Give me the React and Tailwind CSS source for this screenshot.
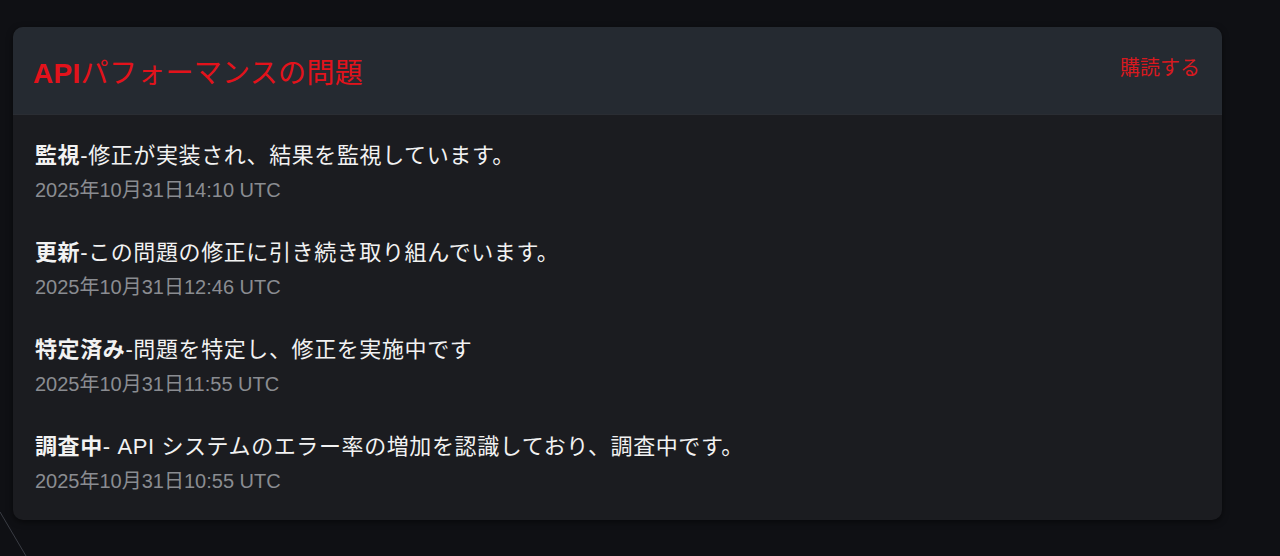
import React from "react";

const items = [
  { s: "監視", t: "-修正が実装され、結果を監視しています。", d: "2025年10月31日14:10 UTC" },
  { s: "更新", t: "-この問題の修正に引き続き取り組んでいます。", d: "2025年10月31日12:46 UTC" },
  { s: "特定済み", t: "-問題を特定し、修正を実施中です", d: "2025年10月31日11:55 UTC" },
  { s: "調査中", t: "- API システムのエラー率の増加を認識しており、調査中です。", d: "2025年10月31日10:55 UTC" },
];

const font = { fontFamily: '"Liberation Sans", "Noto Sans CJK JP", sans-serif' };

export default function App() {
  return (
    <div className="relative w-[1280px] h-[556px] overflow-hidden bg-[#0f1014]" style={font}>
      <svg className="absolute left-0 top-0" width="1280" height="556">
        <line x1="0" y1="512" x2="26" y2="556" stroke="#3a3d44" strokeWidth="1" />
      </svg>
      <div className="relative pl-[13px] pt-[27px]">
        <div className="w-[1209px] rounded-[10px] overflow-hidden bg-[#1b1c20] shadow-[0_2px_6px_rgba(0,0,0,0.5)]">
          <div className="h-[88px] bg-[#252a31] border-b border-[#2a2d33] pl-[20px] pr-[22px] flex items-center justify-between">
            <div className="text-[28px] leading-[34px] text-[#e3121b] pt-[6px] tracking-[0.3px]">
              <span className="font-bold">API</span>パフォーマンスの問題
            </div>
            <div className="text-[20px] leading-[26px] text-[#d8191f] mb-[6px]">購読する</div>
          </div>
          <div className="pl-[22px] pt-[25px] pb-[25px] flex flex-col gap-[33px]">
            {items.map((it) => (
              <div key={it.d} className="flex flex-col gap-[4px]">
                <div className="text-[22px] leading-[32px] text-[#f2f2f2] whitespace-nowrap tracking-[0.6px]">
                  <span className="font-bold">{it.s}</span>
                  {it.t}
                </div>
                <div className="text-[20px] leading-[28px] text-[#8a8c91]">{it.d}</div>
              </div>
            ))}
          </div>
        </div>
      </div>
    </div>
  );
}
